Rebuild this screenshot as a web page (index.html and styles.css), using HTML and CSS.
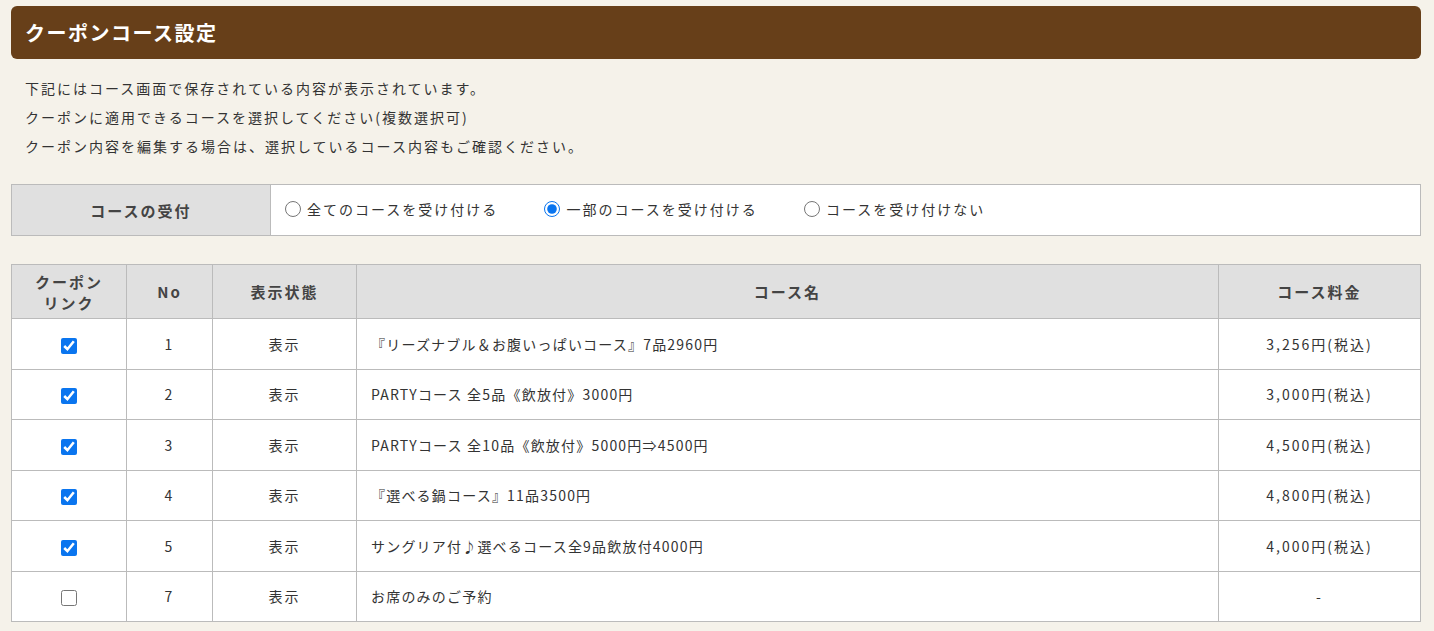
FILE: index.html
```html
<!DOCTYPE html>
<html lang="ja">
<head>
  <meta charset="UTF-8" />
  <meta name="viewport" content="width=device-width, initial-scale=1" />
  <title>クーポンコース設定</title>
  <link rel="stylesheet" href="styles.css">
</head>
<body>
  <div class="page">
    <h1 class="page-title">クーポンコース設定</h1>

    <div class="intro">
      <p>下記にはコース画面で保存されている内容が表示されています。</p>
      <p>クーポンに適用できるコースを選択してください(複数選択可)</p>
      <p>クーポン内容を編集する場合は、選択しているコース内容もご確認ください。</p>
    </div>

    <!-- コースの受付 -->
    <table class="accept-table">
      <tr>
        <th>コースの受付</th>
        <td>
          <label class="radio"><input type="radio" name="accept" />全てのコースを受け付ける</label>
          <label class="radio"><input type="radio" name="accept" checked />一部のコースを受け付ける</label>
          <label class="radio"><input type="radio" name="accept" />コースを受け付けない</label>
        </td>
      </tr>
    </table>

    <!-- コース一覧 -->
    <table class="course-table">
      <colgroup>
        <col class="col-link" />
        <col class="col-no" />
        <col class="col-status" />
        <col />
        <col class="col-price" />
      </colgroup>
      <thead>
        <tr>
          <th>クーポン<br>リンク</th>
          <th>No</th>
          <th>表示状態</th>
          <th>コース名</th>
          <th>コース料金</th>
        </tr>
      </thead>
      <tbody>
        <tr>
          <td class="center"><input type="checkbox" checked /></td>
          <td class="center">1</td>
          <td class="center">表示</td>
          <td class="name">『リーズナブル＆お腹いっぱいコース』7品2960円</td>
          <td class="center">3,256円(税込)</td>
        </tr>
        <tr>
          <td class="center"><input type="checkbox" checked /></td>
          <td class="center">2</td>
          <td class="center">表示</td>
          <td class="name">PARTYコース 全5品《飲放付》3000円</td>
          <td class="center">3,000円(税込)</td>
        </tr>
        <tr>
          <td class="center"><input type="checkbox" checked /></td>
          <td class="center">3</td>
          <td class="center">表示</td>
          <td class="name">PARTYコース 全10品《飲放付》5000円⇒4500円</td>
          <td class="center">4,500円(税込)</td>
        </tr>
        <tr>
          <td class="center"><input type="checkbox" checked /></td>
          <td class="center">4</td>
          <td class="center">表示</td>
          <td class="name">『選べる鍋コース』11品3500円</td>
          <td class="center">4,800円(税込)</td>
        </tr>
        <tr>
          <td class="center"><input type="checkbox" checked /></td>
          <td class="center">5</td>
          <td class="center">表示</td>
          <td class="name">サングリア付♪選べるコース全9品飲放付4000円</td>
          <td class="center">4,000円(税込)</td>
        </tr>
        <tr>
          <td class="center"><input type="checkbox" /></td>
          <td class="center">7</td>
          <td class="center">表示</td>
          <td class="name">お席のみのご予約</td>
          <td class="center">-</td>
        </tr>
      </tbody>
    </table>
  </div>
</body>
</html>
```

FILE: styles.css
```css
body {
  margin: 0;
  padding: 6px 13px 0 11px;
  background-color: #f5f2ea;
  color: #333;
  font-family: "Noto Sans CJK JP", "Noto Sans", sans-serif;
  font-size: 14px;
  letter-spacing: 2px;
}

.page-title {
  margin: 0;
  height: 53px;
  line-height: 53px;
  padding: 0 14px;
  background-color: #673f19;
  color: #fff;
  font-size: 20px;
  font-weight: bold;
  letter-spacing: 1.5px;
  border-radius: 6px;
}

.intro {
  margin: 15px 0 23px;
  padding-left: 14px;
}

.intro p {
  margin: 0;
  line-height: 29px;
}

table {
  width: 100%;
  border-collapse: collapse;
  background-color: #fff;
}

th,
td {
  border: 1px solid #bbb;
}

th {
  background-color: #e0e0e0;
  font-size: 15px;
  font-weight: bold;
  color: #444;
}

.accept-table th {
  width: 258px;
  height: 50px;
  padding: 0;
}

.accept-table td {
  padding: 0 14px;
}

.radio {
  display: inline-flex;
  align-items: center;
  margin-right: 41px;
}

.radio input {
  width: 16px;
  height: 16px;
  margin: 0 6px 0 0;
  accent-color: #0a75ef;
}

.course-table {
  margin-top: 28px;
}

.course-table th {
  height: 53px;
  padding: 0;
  line-height: 21px;
}

.course-table td {
  height: 49.5px;
  padding: 0 14px;
}

.course-table td.name {
  letter-spacing: 1.2px;
}

.course-table td.center {
  text-align: center;
  padding: 0;
}

.course-table input[type="checkbox"] {
  width: 16px;
  height: 16px;
  margin: 0;
  vertical-align: middle;
  accent-color: #0a75ef;
}

.col-link { width: 115px; }
.col-no { width: 86px; }
.col-status { width: 144px; }
.col-price { width: 202px; }
```
